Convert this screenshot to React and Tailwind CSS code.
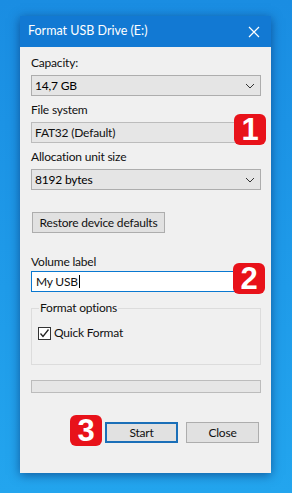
import React from "react";

const font = { fontFamily: 'Lato, "Noto Sans", "Liberation Sans", sans-serif' };

function Badge({ n, className }) {
  return (
    <div
      className={"absolute w-[32px] h-[31px] rounded-[6px] bg-[#e8121a] flex items-center justify-center text-white text-[31px] font-bold leading-none tracking-normal " + className}
      style={{ fontFamily: '"Liberation Sans", Arial, sans-serif' }}
    >
      {n}
    </div>
  );
}

function Chevron() {
  return (
    <svg width="10" height="6" viewBox="0 0 10 6" className="mr-[5px]">
      <path d="M1 1 L5 5 L9 1" fill="none" stroke="#333" strokeWidth="1" />
    </svg>
  );
}

function Combo({ text }) {
  return (
    <div className="h-[21px] border border-[#adadad] bg-[#e5e5e5] flex items-center justify-between pl-[3px] text-black">
      <span>{text}</span>
      <Chevron />
    </div>
  );
}

export default function App() {
  return (
    <div
      className="w-[292px] h-[493px] overflow-hidden pl-[20px] pt-[16px] bg-gradient-to-b from-[#1a8de2] to-[#23a5ee]"
      style={font}
    >
      <div className="w-[251px] h-[457px] bg-[#f0f0f0] flex flex-col shadow-[0_2px_10px_rgba(0,30,90,0.55)]">
        <div className="h-[31px] bg-[#1279d3] flex items-center justify-between pl-[8px] pr-[11px]">
          <span className="text-white text-[12.5px] leading-none">Format USB Drive (E:)</span>
          <svg width="12" height="12" viewBox="0 0 12 12">
            <path d="M1 1 L11 11 M11 1 L1 11" stroke="white" strokeWidth="1.2" fill="none" />
          </svg>
        </div>
        <div className="flex flex-col px-[11px] pr-[10px] text-[12px] tracking-[-0.2px] text-[#111]">
          <div className="mt-[8px] h-[16px] leading-[16px]">Capacity:</div>
          <div className="mt-[4px]"><Combo text="14,7 GB" /></div>

          <div className="mt-[6px] h-[16px] leading-[16px]">File system</div>
          <div className="mt-[4px] relative">
            <div className="h-[21px] border border-[#bcbcbc] bg-[#e6e6e6] flex items-center pl-[3px]">FAT32 (Default)</div>
            <Badge n="1" className="right-[-5px] top-[-8px]" />
          </div>

          <div className="mt-[6px] h-[16px] leading-[16px]">Allocation unit size</div>
          <div className="mt-[4px]"><Combo text="8192 bytes" /></div>

          <div className="mt-[22px] ml-[1px] w-[133px] h-[21px] border border-[#adadad] bg-[#e1e1e1] flex items-center justify-center">
            Restore device defaults
          </div>

          <div className="mt-[21px] h-[16px] leading-[16px]">Volume label</div>
          <div className="mt-[1px] relative">
            <div className="h-[21px] border border-[#0a78d0] bg-white flex items-center pl-[4px]">
              My USB<span className="inline-block w-[1px] h-[13px] bg-black ml-[1px]" />
            </div>
            <Badge n="2" className="right-[-4px] top-[-8px]" />
          </div>

          <div className="mt-[16px] h-[57px] border border-[#dcdcdc] relative">
            <div className="absolute left-[7px] top-[-9px] px-[1px] bg-[#f0f0f0] h-[16px] leading-[16px]">Format options</div>
            <div className="mt-[15px] ml-[6px] flex items-center gap-[3px]">
              <div className="w-[13px] h-[13px] border border-[#333] bg-white flex items-center justify-center">
                <svg width="11" height="11" viewBox="0 0 11 11">
                  <path d="M1.5 5.5 L4 8.5 L9.5 1.5" fill="none" stroke="#222" strokeWidth="1.3" />
                </svg>
              </div>
              <span>Quick Format</span>
            </div>
          </div>

          <div className="mt-[15px] h-[13px] border border-[#bcbcbc] bg-[#e6e6e6]" />

          <div className="mt-[29px] flex justify-end gap-[8px] pr-[2px]">
            <div className="relative">
              <div className="w-[73px] h-[21px] border-2 border-[#1a6fb8] bg-[#e1e1e1] flex items-center justify-center">Start</div>
              <Badge n="3" className="left-[-35px] top-[-7px]" />
            </div>
            <div className="w-[73px] h-[21px] border border-[#adadad] bg-[#e1e1e1] flex items-center justify-center">Close</div>
          </div>
        </div>
      </div>
    </div>
  );
}
